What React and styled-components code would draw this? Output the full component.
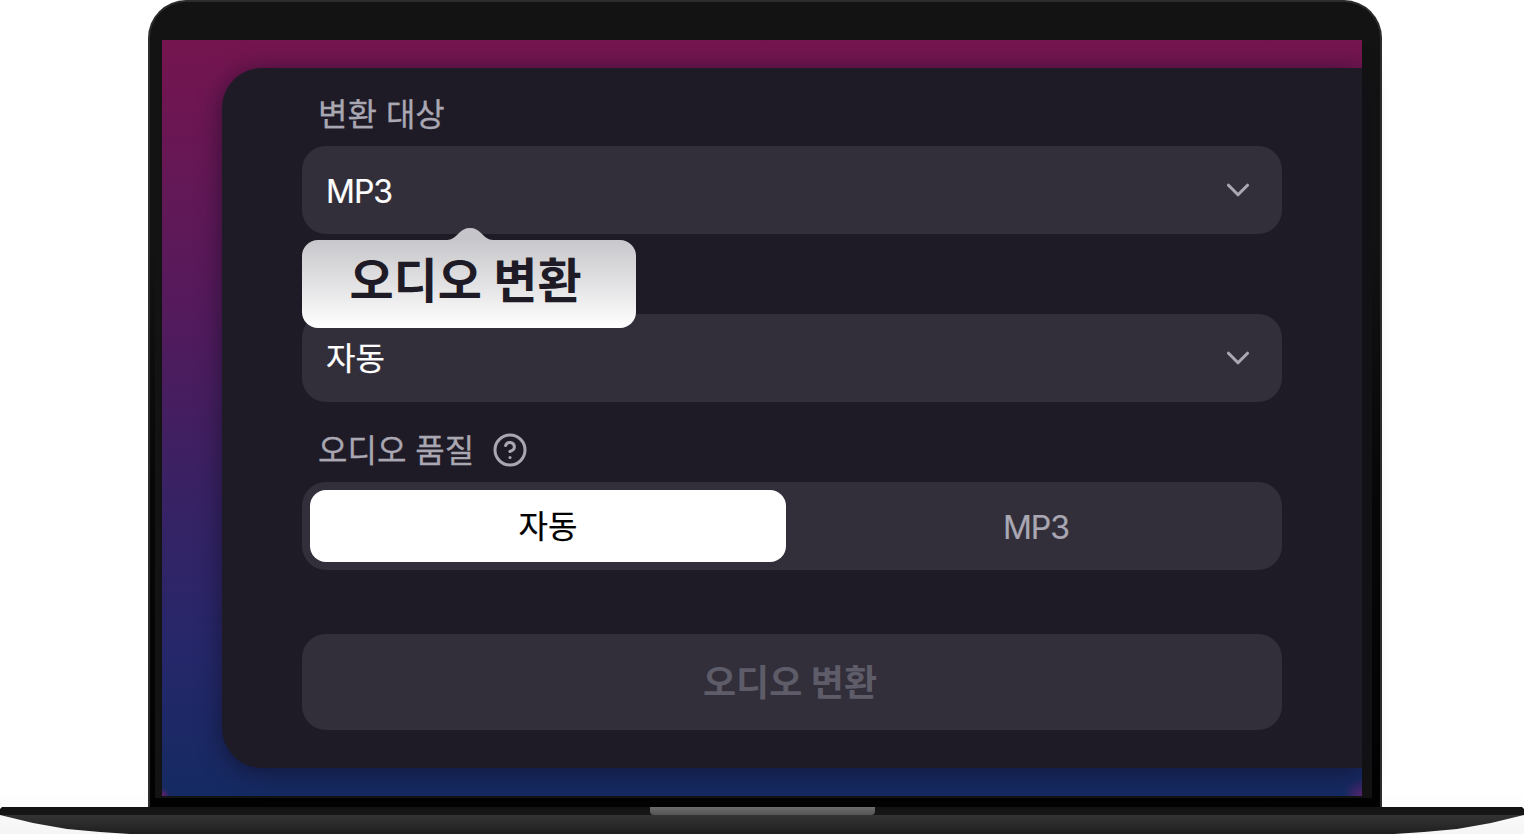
import styled, { createGlobalStyle } from "styled-components";
import { ChevronDown, CircleHelp } from "lucide-react";

const GlobalStyle = createGlobalStyle`
  html, body {
    margin: 0;
    padding: 0;
    background: #fff;
  }
  body {
    font-family: Inter, "Noto Sans CJK KR", sans-serif;
    overflow: hidden;
  }
`;

const Page = styled.div`
  width: 1524px;
  height: 834px;
  display: flex;
  flex-direction: column;
  align-items: center;
  overflow: hidden;
  background: linear-gradient(180deg, #fff 95%, #f5f5f5 100%);
`;

const Lid = styled.div`
  box-sizing: border-box;
  width: 1234px;
  height: 807px;
  flex: none;
  margin-left: 6px;
  padding: 0 8px 9px 5px;
  border: 2px solid #2d2d2d;
  border-bottom: 0;
  border-radius: 38px 38px 0 0;
  background: linear-gradient(180deg, #131313 0%, #131313 30%, #070707 60%, #020202 100%);
`;

const Bezel = styled.div`
  box-sizing: border-box;
  height: 796px;
  padding: 38px 10px 2px 7px;
  border-radius: 36px 36px 0 0;
  background: #131313;
`;

const Screen = styled.div`
  box-sizing: border-box;
  height: 756px;
  padding: 28px 0 28px 60px;
  background:
    radial-gradient(circle at 0 100%, #6a1d6e 0, transparent 8px),
    radial-gradient(circle at 100% 100%, #55246e 0, transparent 18px),
    linear-gradient(180deg, #75154f 0%, #551a5c 35%, #382264 60%, #26276a 80%, #152a62 100%);
`;

const Panel = styled.div`
  box-sizing: border-box;
  height: 700px;
  padding: 30px 80px 38px;
  border-radius: 40px 0 0 40px;
  background: #1e1b27;
  box-shadow: 0 4px 24px rgba(15, 12, 30, 0.6);
`;

const Field = styled.div`
  position: relative;
  margin-bottom: 32px;
`;

const Label = styled.div`
  box-sizing: border-box;
  display: flex;
  align-items: center;
  gap: 18px;
  height: 32px;
  margin: 0 0 16px 16px;
  padding-top: 2px;
  font-size: 32px;
  line-height: 32px;
  color: #a9a7b2;
  -webkit-text-stroke: 0.3px #a9a7b2;
  svg {
    margin-top: -2px;
    -webkit-text-stroke: 0;
  }
`;

const Select = styled.div`
  display: flex;
  align-items: center;
  justify-content: space-between;
  height: 88px;
  padding: 0 25px 0 24px;
  border-radius: 24px;
  background: #322f3b;
  font-size: 32px;
  color: #fff;
  svg {
    color: #a9a7b2;
  }
`;

/* latin and hangul sit on different lines in this font stack */
const Value = styled.span`
  padding: ${(p) => (p.$latin ? "2px 0 0" : "0 0 4px")};
  letter-spacing: ${(p) => (p.$latin ? "-1px" : "0")};
  -webkit-text-stroke: 0.2px currentColor;
`;

const Segments = styled.div`
  display: flex;
  gap: 12px;
  height: 88px;
  box-sizing: border-box;
  padding: 8px;
  border-radius: 24px;
  background: #322f3b;
`;

const Segment = styled.div`
  flex: 1;
  display: flex;
  align-items: center;
  justify-content: center;
  border-radius: 16px;
  font-size: 32px;
  color: ${(p) => (p.$active ? "#000" : "#a9a7b2")};
  background: ${(p) => (p.$active ? "#fff" : "transparent")};
`;

const Submit = styled.div`
  display: flex;
  align-items: center;
  justify-content: center;
  height: 96px;
  box-sizing: border-box;
  margin-top: 64px;
  padding: 0 4px 4px 0;
  border-radius: 24px;
  background: #322f3b;
  font-size: 36px;
  font-weight: 700;
  color: #5e5c68;
`;

const Tooltip = styled.div`
  position: absolute;
  left: 0;
  top: -26px;
  box-sizing: border-box;
  width: 334px;
  height: 88px;
  padding: 0 7px 14px 0;
  display: flex;
  align-items: center;
  justify-content: center;
  border-radius: 16px;
  background: linear-gradient(180deg, #c8c7cb 0%, #e2e2e4 50%, #fff 100%);
  font-size: 48px;
  font-weight: 700;
  color: #1e1b27;
`;

const TooltipArrow = styled.svg`
  position: absolute;
  left: 145px;
  top: -38px;
`;

const LaptopBase = styled.div`
  width: 1524px;
  height: 27px;
  flex: none;
  display: flex;
  justify-content: center;
  clip-path: polygon(
    0 2px, 2px 0, 1522px 0, 1524px 2px, 1524px 8px, 1491px 16px, 1457px 22px, 1424px 25px, 1394px 27px,
    130px 27px, 100px 25px, 67px 22px, 33px 16px, 0 8px
  );
  background: linear-gradient(180deg, #131313 0%, #171717 29%, #333 31%, #2b2b2b 60%, #1f1f1f 100%);
`;

const Notch = styled.div`
  width: 225px;
  height: 8px;
  border-radius: 0 0 4px 4px;
  background: linear-gradient(180deg, #6c6c6c, #555);
`;

export default function App() {
  return (
    <Page>
      <GlobalStyle />
      <Lid>
        <Bezel>
          <Screen>
            <Panel>
              <Field>
                <Label>변환 대상</Label>
                <Select>
                  <Value $latin>MP3</Value>
                  <ChevronDown size={38} strokeWidth={2} />
                </Select>
              </Field>
              <Field>
                <Label />
                <Select>
                  <Value>자동</Value>
                  <ChevronDown size={38} strokeWidth={2} />
                </Select>
                <TooltipArrow width="46" height="12" viewBox="0 0 46 12">
                  <path d="M0 12 C5 12 8 9 12 5 C15 2 18 0 23 0 C28 0 31 2 34 5 C38 9 41 12 46 12 Z" fill="#c6c5ca" />
                </TooltipArrow>
                <Tooltip>오디오 변환</Tooltip>
              </Field>
              <Field>
                <Label>
                  오디오 품질
                  <CircleHelp size={36} strokeWidth={2} />
                </Label>
                <Segments>
                  <Segment $active>
                    <Value>자동</Value>
                  </Segment>
                  <Segment>
                    <Value $latin>MP3</Value>
                  </Segment>
                </Segments>
              </Field>
              <Submit>오디오 변환</Submit>
            </Panel>
          </Screen>
        </Bezel>
      </Lid>
      <LaptopBase>
        <Notch />
      </LaptopBase>
    </Page>
  );
}
